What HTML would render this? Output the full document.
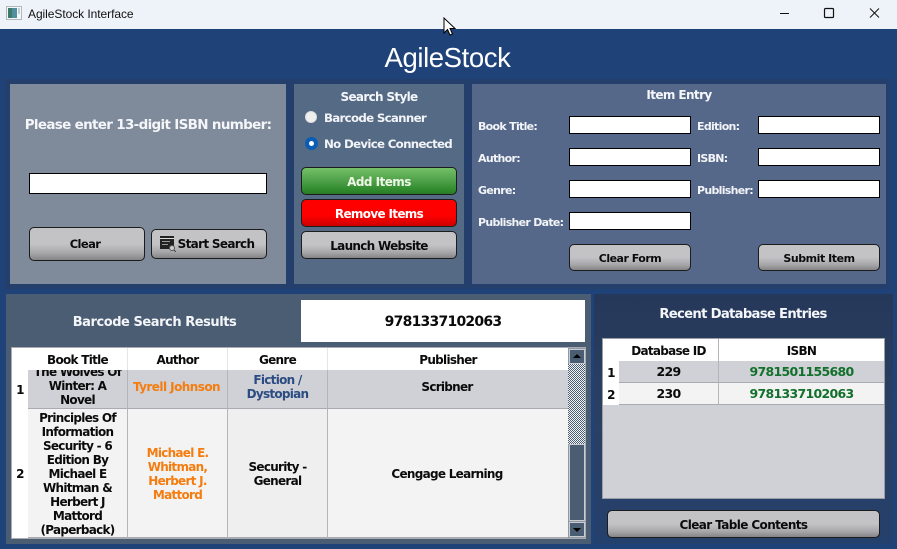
<!DOCTYPE html>
<html><head><meta charset="utf-8"><style>
html,body{margin:0;padding:0}
body{width:897px;height:549px;overflow:hidden;position:relative;background:#1f4278;font-family:"DejaVu Sans",sans-serif;font-weight:bold;font-size:12px;letter-spacing:-.72px}
div{position:absolute;box-sizing:border-box}
.t{white-space:nowrap;text-align:center;line-height:14px}
.l{white-space:nowrap;line-height:14px;color:#f2f4f8;font-size:11px}
.w{color:#f4f6fa}
.in{background:#fff;border:1px solid #000}
.b{border:1px solid #1c1c1c;border-radius:5px;background:linear-gradient(#c3c3c6 0,#c3c3c6 50%,#a5a5a7 80%,#848486 100%);color:#0b0b0b;text-align:center;display:flex;align-items:center;justify-content:center;white-space:nowrap}
.c{position:absolute;text-align:center;display:flex;align-items:center;justify-content:center;line-height:14px;color:#0b0b0b}
.sb{background:#4b5d73;border:1px solid #c9ccd2}
.n{font-size:12.500px;letter-spacing:-.7px}
</style></head><body>
<div style="left:0;top:0;width:897px;height:29px;background:#eef3fa"></div>
<svg style="position:absolute;left:6px;top:6px" width="16" height="14" viewBox="0 0 16 14"><rect x=".5" y=".5" width="15" height="13" fill="#f4f6f8" stroke="#b4b8bd"/><rect x="2" y="2" width="9" height="10" fill="#4f8fa0"/><rect x="2" y="2" width="4" height="10" fill="#3f7a68"/><rect x="12" y="2" width="2" height="6" fill="#c5ccd4"/></svg>
<div style="left:28px;top:7px;font-family:'Liberation Sans',sans-serif;font-weight:normal;font-size:12px;letter-spacing:-.06px;line-height:14px;color:#111;white-space:nowrap">AgileStock Interface</div>
<svg style="position:absolute;left:780px;top:6px" width="117" height="16" viewBox="0 0 117 16" fill="none" stroke="#111"><path d="M-1 7.500H9" stroke-width="1"/><rect x="44.500" y="2.500" width="9" height="9" rx="1" stroke-width="1.200"/><path d="M90 2.500L99 11.500M99 2.500L90 11.500" stroke-width="1"/></svg>
<div class="t" style="left:-1px;top:41px;width:897px;line-height:33px;font-family:'Liberation Sans',sans-serif;font-size:27.500px;letter-spacing:-.4px;font-weight:normal;color:#fff">AgileStock</div>

<div style="left:5px;top:79px;width:885px;height:210px;background:#243f6c"></div>
<div style="left:10px;top:84px;width:276px;height:200px;background:#7f8a9a"></div>
<div style="left:294px;top:84px;width:170px;height:200px;background:#546a85"></div>
<div style="left:472px;top:84px;width:414px;height:200px;background:#56688a"></div>

<div class="t w" style="left:10px;top:118px;width:276px;font-size:13.500px;letter-spacing:-.68px">Please enter 13-digit ISBN number:</div>
<div class="in" style="left:29px;top:173px;width:238px;height:21px"></div>
<div class="b" style="left:29px;top:227px;width:116px;height:34px;font-size:11.500px;letter-spacing:-.6px;padding-right:4px">Clear</div>
<div class="b" style="left:151px;top:229px;width:116px;height:30px;padding-left:14px;letter-spacing:-.67px">Start Search</div>
<svg style="position:absolute;left:160px;top:236px" width="16" height="16" viewBox="0 0 16 16"><rect x="0" y="0" width="14" height="13" fill="#222"/><rect x="0" y="2" width="14" height="1" fill="#ddd"/><rect x="2" y="5" width="8" height="1" fill="#999"/><rect x="2" y="8" width="6" height="1" fill="#999"/><circle cx="12" cy="12" r="2.500" fill="#c9ced4" stroke="#555"/><path d="M14 14L16 16" stroke="#444"/></svg>

<div class="t w" style="left:294px;top:90px;width:170px;letter-spacing:-.67px">Search Style</div>
<div style="left:305px;top:111px;width:12px;height:12px;border-radius:50%;background:#efefef;border:1px solid #ddd"></div>
<div style="left:305px;top:137px;width:13px;height:13px;border-radius:50%;background:#0a5cb5"></div>
<div style="left:309px;top:141px;width:5px;height:5px;border-radius:50%;background:#fff"></div>
<div class="l" style="left:324px;top:111px;font-size:11.800px;letter-spacing:-.7px">Barcode Scanner</div>
<div class="l" style="left:324px;top:137px;font-size:11.800px;letter-spacing:-.7px">No Device Connected</div>
<div class="b" style="left:301px;top:167px;width:156px;height:28px;color:#eef7e6;letter-spacing:-.55px;padding-top:1px;background:linear-gradient(#74bf68 0,#4ea048 50%,#2f8a2c 85%,#2a7a28 100%)">Add Items</div>
<div class="b" style="left:301px;top:199px;width:156px;height:28px;color:#fff;letter-spacing:-.67px;padding-top:1px;background:linear-gradient(#ff0000 0,#ff0000 60%,#cc0000 100%)">Remove Items</div>
<div class="b" style="left:301px;top:231px;width:156px;height:28px;letter-spacing:-.7px;padding-top:1px">Launch Website</div>

<div class="t w" style="left:472px;top:88px;width:414px;letter-spacing:-.6px">Item Entry</div>
<div class="l" style="left:478px;top:120px;letter-spacing:-.7px">Book Title:</div>
<div class="l" style="left:478px;top:152px;letter-spacing:-.7px">Author:</div>
<div class="l" style="left:478px;top:184px;letter-spacing:-.7px">Genre:</div>
<div class="l" style="left:478px;top:216px;letter-spacing:-.72px">Publisher Date:</div>
<div class="l" style="left:697px;top:120px;letter-spacing:-.7px">Edition:</div>
<div class="l" style="left:697px;top:152px;letter-spacing:-.7px">ISBN:</div>
<div class="l" style="left:697px;top:184px;letter-spacing:-.7px">Publisher:</div>
<div class="in" style="left:569px;top:116px;width:122px;height:18px"></div>
<div class="in" style="left:569px;top:148px;width:122px;height:18px"></div>
<div class="in" style="left:569px;top:180px;width:122px;height:18px"></div>
<div class="in" style="left:569px;top:212px;width:122px;height:18px"></div>
<div class="in" style="left:758px;top:116px;width:122px;height:18px"></div>
<div class="in" style="left:758px;top:148px;width:122px;height:18px"></div>
<div class="in" style="left:758px;top:180px;width:122px;height:18px"></div>
<div class="b" style="left:569px;top:244px;width:122px;height:27px;font-size:11px;letter-spacing:-.5px;padding-top:1px">Clear Form</div>
<div class="b" style="left:758px;top:244px;width:122px;height:27px;font-size:11px;letter-spacing:-.45px;padding-top:1px">Submit Item</div>

<div style="left:6px;top:294px;width:585px;height:250px;background:#4b5d73"></div>
<div class="t w" style="left:6px;top:316px;width:297px;font-size:13px;letter-spacing:-.45px">Barcode Search Results</div>
<div class="t" style="left:301px;top:300px;width:284px;height:42px;background:#fff;color:#0a0a0a;line-height:44px;font-size:14px;letter-spacing:-.77px">9781337102063</div>

<div style="left:11px;top:347px;width:575px;height:192px;background:#f3f3f4;border:1px solid #a9abb1;overflow:hidden">
  <div style="left:0;top:0;width:16px;height:190px;background:#fff"></div>
  <div style="left:16px;top:0;width:541px;height:22px;background:#fff"></div>
  <div style="left:16px;top:22px;width:541px;height:38px;background:#d0d1d6"></div>
  <div style="left:16px;top:60px;width:541px;height:1px;background:#a9abb1"></div>
  <div style="left:16px;top:189px;width:541px;height:1px;background:#a9abb1"></div>
  <div style="left:115px;top:0;width:1px;height:22px;background:#e6e6e8"></div>
  <div style="left:215px;top:0;width:1px;height:22px;background:#e6e6e8"></div>
  <div style="left:315px;top:0;width:1px;height:22px;background:#e6e6e8"></div>
  <div style="left:115px;top:22px;width:1px;height:168px;background:#b4b5ba"></div>
  <div style="left:215px;top:22px;width:1px;height:168px;background:#b4b5ba"></div>
  <div style="left:315px;top:22px;width:1px;height:168px;background:#b4b5ba"></div>
  <div style="left:216px;top:61px;width:99px;height:128px;background:#efeff0"></div>
  <div class="c" style="left:16px;top:0;width:99px;height:23px">Book Title</div>
  <div class="c" style="left:116px;top:0;width:99px;height:23px">Author</div>
  <div class="c" style="left:216px;top:0;width:99px;height:23px">Genre</div>
  <div class="c" style="left:316px;top:0;width:240px;height:23px">Publisher</div>
  <div class="c" style="left:0;top:22px;width:16px;height:38px;padding-top:1px">1</div>
  <div class="c" style="left:0;top:61px;width:16px;height:129px">2</div>
  <div style="left:16px;top:22px;width:99px;height:38px;overflow:hidden"><div class="c" style="left:0;top:-5px;width:99px;height:14px">The Wolves Of</div><div class="c" style="left:0;top:9px;width:99px;height:14px">Winter: A</div><div class="c" style="left:0;top:23px;width:99px;height:14px">Novel</div></div>
  <div class="c" style="left:116px;top:22px;width:97px;height:34px;color:#f57c0e;letter-spacing:-.55px">Tyrell Johnson</div>
  <div class="c" style="left:216px;top:25px;width:99px;height:28px;color:#2a4c82">Fiction /<br>Dystopian</div>
  <div class="c" style="left:316px;top:22px;width:238px;height:34px">Scribner</div>
  <div class="c" style="left:16px;top:63px;width:99px;height:126px">Principles Of<br>Information<br>Security - 6<br>Edition By<br>Michael E<br>Whitman &amp;<br>Herbert J<br>Mattord<br>(Paperback)</div>
  <div class="c" style="left:116px;top:63px;width:99px;height:126px;color:#f57c0e">Michael E.<br>Whitman,<br>Herbert J.<br>Mattord</div>
  <div class="c" style="left:216px;top:63px;width:99px;height:126px">Security -<br>General</div>
  <div class="c" style="left:316px;top:63px;width:238px;height:126px">Cengage Learning</div>
  <div style="left:556px;top:0;width:17px;height:190px;background:#8f99a6"></div>
  <div style="left:556px;top:16px;width:17px;height:80px;background:repeating-conic-gradient(#f4f5f7 0 25%,#4b5d73 0 50%) 0 0/2px 2px"></div>
  <div class="sb" style="left:557px;top:1px;width:16px;height:15px"></div>
  <div style="left:561px;top:6px;width:0;height:0;border-left:4px solid transparent;border-right:4px solid transparent;border-bottom:4px solid #000"></div>
  <div class="sb" style="left:557px;top:96px;width:16px;height:77px"></div>
  <div class="sb" style="left:557px;top:174px;width:16px;height:15px"></div>
  <div style="left:561px;top:180px;width:0;height:0;border-left:4px solid transparent;border-right:4px solid transparent;border-top:4px solid #000"></div>
</div>

<div style="left:594px;top:294px;width:299px;height:250px;background:linear-gradient(#26385a 0,#2a4063 50%,#24406c 100%)"></div>
<div class="t w" style="left:595px;top:308px;width:296px;font-size:13.200px;letter-spacing:-.7px">Recent Database Entries</div>
<div style="left:602px;top:338px;width:283px;height:161px;background:#d0d1d6;border:1px solid #9c9ea5;overflow:hidden">
  <div style="left:0;top:0;width:16px;height:66px;background:#fff"></div>
  <div style="left:16px;top:0;width:265px;height:22px;background:#fff"></div>
  <div style="left:16px;top:44px;width:265px;height:21px;background:#f3f3f4"></div>
  <div style="left:16px;top:43px;width:265px;height:1px;background:#a9abb1"></div>
  <div style="left:16px;top:65px;width:265px;height:1px;background:#a9abb1"></div>
  <div style="left:115px;top:0;width:1px;height:66px;background:#b4b5ba"></div>
  <div class="c" style="left:16px;top:0;width:99px;height:23px">Database ID</div>
  <div class="c" style="left:116px;top:0;width:165px;height:23px">ISBN</div>
  <div class="c" style="left:0;top:23px;width:16px;height:22px">1</div>
  <div class="c" style="left:0;top:45px;width:16px;height:22px">2</div>
  <div class="c n" style="left:16px;top:22px;width:99px;height:21px">229</div>
  <div class="c n" style="left:16px;top:44px;width:99px;height:21px">230</div>
  <div class="c n" style="left:116px;top:22px;width:165px;height:21px;color:#12702c">9781501155680</div>
  <div class="c n" style="left:116px;top:44px;width:165px;height:21px;color:#12702c">9781337102063</div>
</div>
<div class="b" style="left:607px;top:510px;width:273px;height:28px;letter-spacing:-.6px;padding-top:1px">Clear Table Contents</div>

<svg style="position:absolute;left:443px;top:17px" width="14" height="20" viewBox="0 0 14 20"><path d="M1 1V16L4.500 12.500L7 18L9.500 17L7 11.500H12Z" fill="#fff" stroke="#000" stroke-width="1"/></svg>
</body></html>
